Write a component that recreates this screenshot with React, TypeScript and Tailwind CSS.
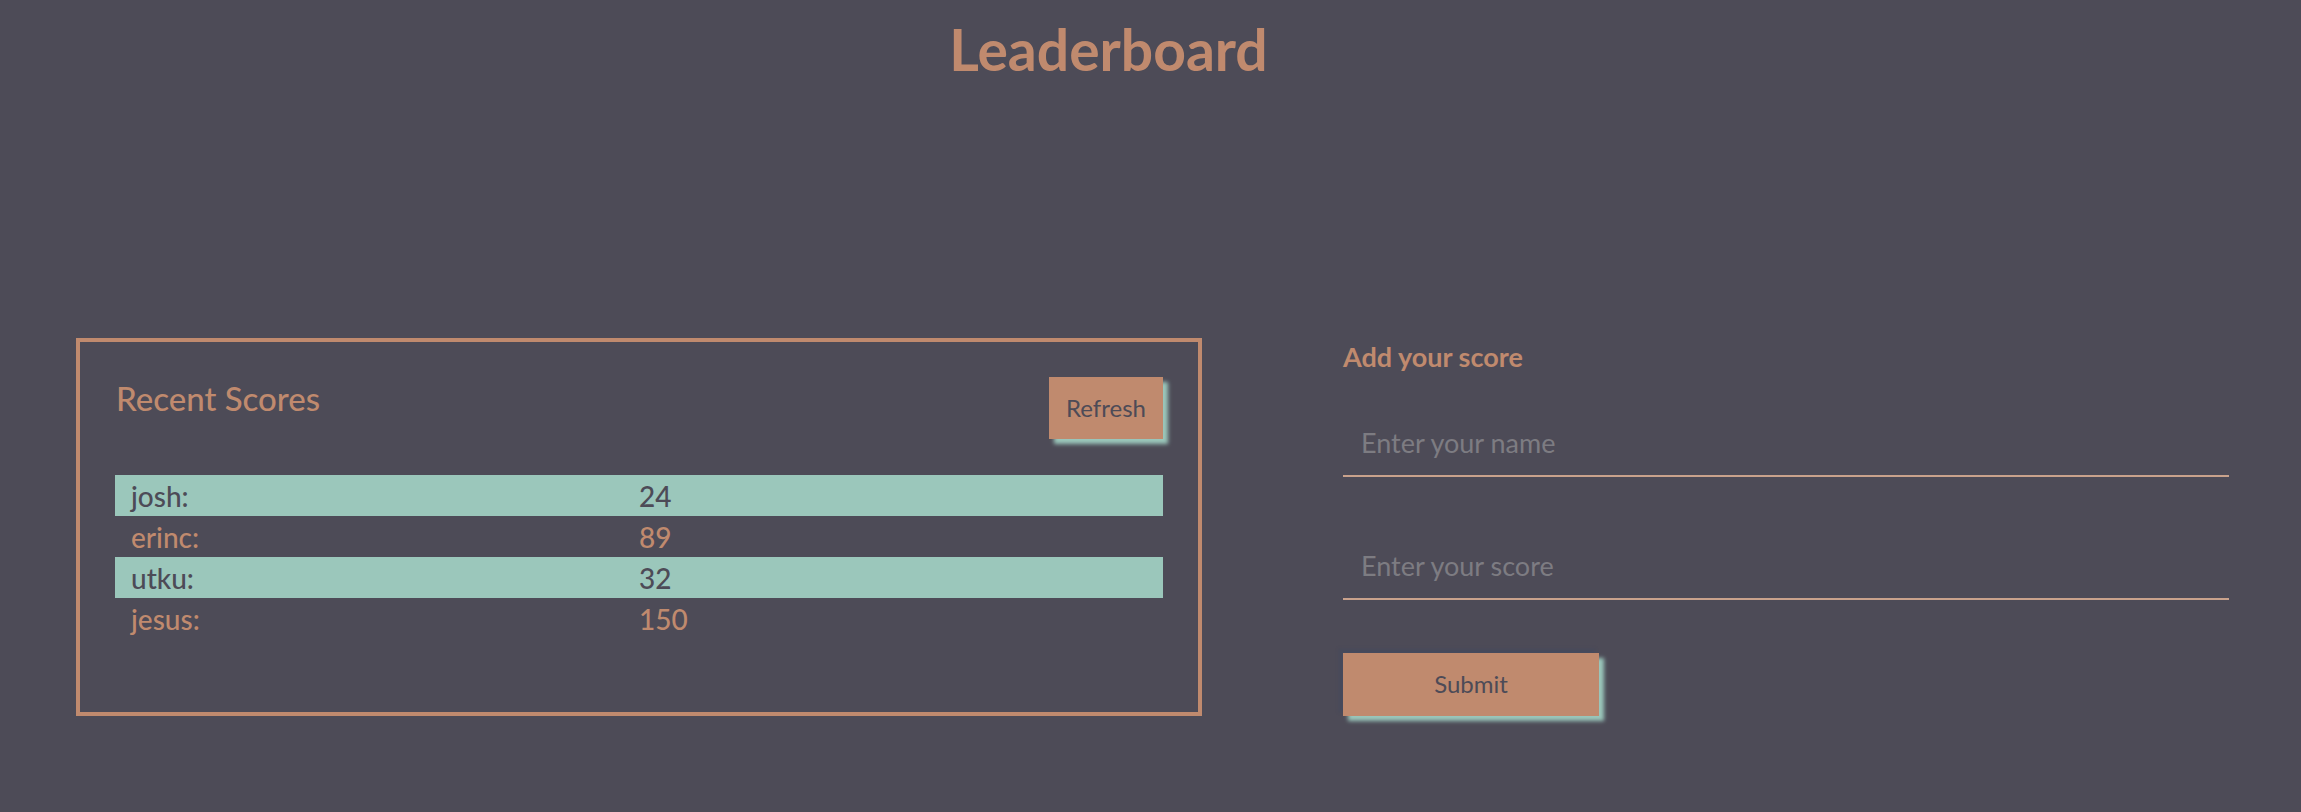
const scores = [
  { name: "josh", score: 24 },
  { name: "erinc", score: 89 },
  { name: "utku", score: 32 },
  { name: "jesus", score: 150 },
];

export default function App() {
  return (
    <div className="min-h-[812px] w-full bg-[#4d4b57] font-['Lato','Liberation_Sans',sans-serif] text-[#c08a6e]">
      <header className="flex justify-center pr-[84px] pt-[15px]">
        <h1 className="text-[57px] font-bold leading-[1.2]">Leaderboard</h1>
      </header>

      <main className="mt-[255px] flex items-start pl-[76px]">
        {/* recent scores */}
        <section className="h-[378px] w-[1126px] border-[4px] border-[#c08a6e] px-[35px] pt-[35px]">
          <div className="flex items-start justify-between">
            <h2 className="ml-[1px] mt-[2px] text-[33px] font-medium leading-[1.2]">Recent Scores</h2>
            <button className="h-[62px] w-[114px] bg-[#c08a6e] text-[24px] text-[#4d4b57] shadow-[5px_5px_4px_#9bc7bb]">
              Refresh
            </button>
          </div>
          <ul className="mt-[36px]">
            {scores.map((s, i) => (
              <li
                key={s.name}
                className={`grid h-[41px] grid-cols-[508px_1fr] items-center pl-[16px] text-[28px] font-medium ${
                  i % 2 === 0 ? "bg-[#9bc7bb] text-[#4d4b57]" : "text-[#c08a6e]"
                }`}
              >
                <span>{s.name}:</span>
                <span>{s.score}</span>
              </li>
            ))}
          </ul>
        </section>

        {/* add score form */}
        <section className="ml-[141px] w-[886px] pt-[3px]">
          <h3 className="text-[27px] font-bold leading-[1.2]">Add your score</h3>
          <input
            placeholder="Enter your name"
            className="mt-[36px] block h-[67px] w-full border-b-[2px] border-[#c9a28c] bg-transparent pl-[18px] text-[27px] text-[#c08a6e] outline-none placeholder:text-[#7d7c82]"
          />
          <input
            placeholder="Enter your score"
            className="mt-[56px] block h-[67px] w-full border-b-[2px] border-[#c9a28c] bg-transparent pl-[18px] text-[27px] text-[#c08a6e] outline-none placeholder:text-[#7d7c82]"
          />
          <button className="mt-[53px] h-[63px] w-[256px] bg-[#c08a6e] text-[24px] text-[#4d4b57] shadow-[-4px_-4px_3px_#474a5c,5px_5px_4px_#9bc7bb]">
            Submit
          </button>
        </section>
      </main>
    </div>
  );
}
